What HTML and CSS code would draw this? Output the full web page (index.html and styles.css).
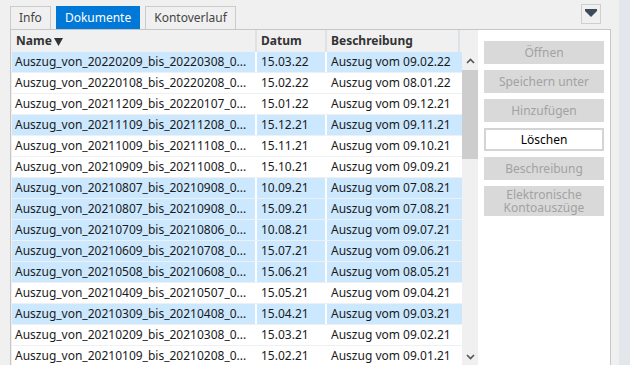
FILE: index.html
```html
<!doctype html>
<html lang="de">
<head>
    <meta charset="utf-8">
    <title>Dokumente</title>
    <link rel="stylesheet" href="styles.css">
</head>
<body>
<div class="window">
    <div class="main">
        <div class="tabbar">
            <div class="tab">Info</div>
            <div class="tab active">Dokumente</div>
            <div class="tab">Kontoverlauf</div>
            <div class="menu-btn">
                <svg width="18" height="18" viewBox="0 0 18 18"><polygon points="3,4 15,4 15,6 9,12 3,6" fill="#3c4a5a"/></svg>
            </div>
        </div>
        <div class="frame">
            <div class="grid">
                <div class="grid-head">
                    <div class="hcell">Name <svg class="sort" width="9" height="8" viewBox="0 0 9 8"><polygon points="0,0 9,0 4.5,8" fill="#333"/></svg></div>
                    <div class="hcell">Datum</div>
                    <div class="hcell">Beschreibung</div>
                </div>
                <div class="grid-body">
                    <div class="rows">
                        <div class="row sel"><div class="cell">Auszug_von_20220209_bis_20220308_0...</div><div class="cell">15.03.22</div><div class="cell">Auszug vom 09.02.22</div></div>
                        <div class="row"><div class="cell">Auszug_von_20220108_bis_20220208_0...</div><div class="cell">15.02.22</div><div class="cell">Auszug vom 08.01.22</div></div>
                        <div class="row"><div class="cell">Auszug_von_20211209_bis_20220107_0...</div><div class="cell">15.01.22</div><div class="cell">Auszug vom 09.12.21</div></div>
                        <div class="row sel"><div class="cell">Auszug_von_20211109_bis_20211208_0...</div><div class="cell">15.12.21</div><div class="cell">Auszug vom 09.11.21</div></div>
                        <div class="row"><div class="cell">Auszug_von_20211009_bis_20211108_0...</div><div class="cell">15.11.21</div><div class="cell">Auszug vom 09.10.21</div></div>
                        <div class="row"><div class="cell">Auszug_von_20210909_bis_20211008_0...</div><div class="cell">15.10.21</div><div class="cell">Auszug vom 09.09.21</div></div>
                        <div class="row sel"><div class="cell">Auszug_von_20210807_bis_20210908_0...</div><div class="cell">10.09.21</div><div class="cell">Auszug vom 07.08.21</div></div>
                        <div class="row sel"><div class="cell">Auszug_von_20210807_bis_20210908_0...</div><div class="cell">15.09.21</div><div class="cell">Auszug vom 07.08.21</div></div>
                        <div class="row sel"><div class="cell">Auszug_von_20210709_bis_20210806_0...</div><div class="cell">10.08.21</div><div class="cell">Auszug vom 09.07.21</div></div>
                        <div class="row sel"><div class="cell">Auszug_von_20210609_bis_20210708_0...</div><div class="cell">15.07.21</div><div class="cell">Auszug vom 09.06.21</div></div>
                        <div class="row sel"><div class="cell">Auszug_von_20210508_bis_20210608_0...</div><div class="cell">15.06.21</div><div class="cell">Auszug vom 08.05.21</div></div>
                        <div class="row"><div class="cell">Auszug_von_20210409_bis_20210507_0...</div><div class="cell">15.05.21</div><div class="cell">Auszug vom 09.04.21</div></div>
                        <div class="row sel"><div class="cell">Auszug_von_20210309_bis_20210408_0...</div><div class="cell">15.04.21</div><div class="cell">Auszug vom 09.03.21</div></div>
                        <div class="row"><div class="cell">Auszug_von_20210209_bis_20210308_0...</div><div class="cell">15.03.21</div><div class="cell">Auszug vom 09.02.21</div></div>
                        <div class="row"><div class="cell">Auszug_von_20210109_bis_20210208_0...</div><div class="cell">15.02.21</div><div class="cell">Auszug vom 09.01.21</div></div>
                    </div>
                    <div class="vscroll">
                        <div class="sb-arrow"><svg width="9" height="6" viewBox="0 0 9 6"><polyline points="1,5 4.5,1.5 8,5" fill="none" stroke="#555" stroke-width="1.6"/></svg></div>
                        <div class="sb-thumb"></div>
                        <div class="sb-track"></div>
                        <div class="sb-arrow"><svg width="9" height="6" viewBox="0 0 9 6"><polyline points="1,1 4.5,4.5 8,1" fill="none" stroke="#555" stroke-width="1.6"/></svg></div>
                    </div>
                </div>
            </div>
            <div class="actions">
                <div class="btn disabled">Öffnen</div>
                <div class="btn disabled">Speichern unter</div>
                <div class="btn disabled">Hinzufügen</div>
                <div class="btn">Löschen</div>
                <div class="btn disabled">Beschreibung</div>
                <div class="btn disabled tall"><span class="line">Elektronische</span><span class="line">Kontoauszüge</span></div>
            </div>
        </div>
    </div>
    <div class="edge"></div>
</div>
</body>
</html>
```

FILE: styles.css
```css
* {
    box-sizing: border-box;
}

html, body {
    margin: 0;
    padding: 0;
    height: 365px;
    overflow: hidden;
}

body {
    background: #f0f0f0;
    font-family: "Noto Sans", "Open Sans", sans-serif;
    font-size: 12px;
    color: #1a1a1a;
}

.window {
    display: flex;
    height: 365px;
}

.main {
    width: 619px;
    display: flex;
    flex-direction: column;
}

.edge {
    flex: 1;
    background: #e3e7eb;
}

/* tabs */
.tabbar {
    height: 29px;
    display: flex;
    align-items: flex-start;
    gap: 5px;
    padding: 0 18px 0 10px;
}

.tab {
    margin-top: 6px;
    height: 23px;
    line-height: 21px;
    padding: 0 8px;
    border: 1px solid #cbcbcb;
    border-bottom: none;
    background: #f0f0f0;
    color: #444;
}

.tab.active {
    background: #0078d7;
    border-color: #0078d7;
    color: #fff;
}

.menu-btn {
    margin-left: auto;
    margin-top: 4px;
    width: 20px;
    height: 20px;
    border: 1px solid #cfcfcf;
    display: flex;
    align-items: center;
    justify-content: center;
}

/* frame */
.frame {
    flex: 1;
    margin-left: 10px;
    width: 601px;
    border: 1px solid #c6c6c6;
    border-bottom: none;
    display: flex;
    min-height: 0;
}

.grid {
    width: 467px;
    padding-left: 1px;
    display: flex;
    flex-direction: column;
}

.grid-head {
    height: 22px;
    display: grid;
    grid-template-columns: 245px 70px 133px;
    background: #f0f0f0;
}

.hcell {
    border-right: 2px solid #dde2e7;
    font-weight: bold;
    color: #333;
    line-height: 22px;
    padding-left: 4px;
    white-space: nowrap;
}

.hcell .sort {
    margin-left: -1px;
    vertical-align: -0.5px;
}

.grid-body {
    flex: 1;
    display: flex;
    min-height: 0;
}

.rows {
    width: 450px;
    background: #fff;
}

.row {
    height: 21px;
    display: grid;
    grid-template-columns: 243px 68px 135px;
    column-gap: 2px;
    border-bottom: 1px solid #eef0f2;
}

.cell {
    line-height: 20px;
    padding-left: 4px;
    white-space: nowrap;
    overflow: hidden;
    text-overflow: ellipsis;
}

.cell:first-child {
    padding-left: 3px;
}

.row.sel .cell {
    background: #cce8ff;
}

/* scrollbar */
.vscroll {
    width: 16px;
    background: #f0f0f0;
    display: flex;
    flex-direction: column;
}

.sb-arrow {
    height: 17px;
    display: flex;
    align-items: center;
    justify-content: center;
}

.sb-thumb {
    height: 89px;
    margin: 1px 0 0;
    background: #cdcdcd;
}

.sb-track {
    flex: 1;
}

/* buttons */
.actions {
    width: 132px;
    background: #fff;
    padding: 11px 0 0 6px;
    display: flex;
    flex-direction: column;
    gap: 6px;
}

.btn {
    width: 120px;
    height: 23px;
    line-height: 19px;
    text-align: center;
    border: 2px solid #d4d4d4;
    background: #fff;
    color: #000;
}

.btn.disabled {
    background: #d9d9d9;
    border-color: #d9d9d9;
    color: #a2a2a2;
}

.btn.tall {
    height: 30px;
    display: flex;
    flex-direction: column;
    justify-content: center;
    line-height: 13px;
}

.btn .line {
    display: block;
}
```
